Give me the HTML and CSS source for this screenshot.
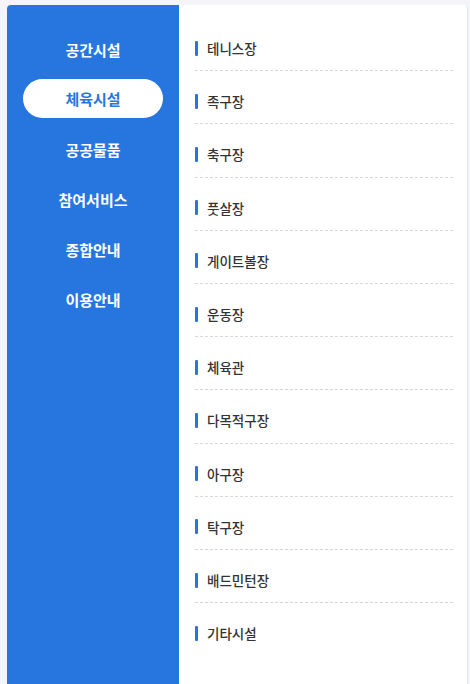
FILE: index.html
```html
<!DOCTYPE html>
<html lang="ko">
<head>
<meta charset="utf-8">
<link rel="stylesheet" href="styles.css">
</head>
<body>
<div class="wrap">
  <nav class="side">
    <a class="side-item">공간시설</a>
    <a class="side-item active"><span class="pill">체육시설</span></a>
    <a class="side-item">공공물품</a>
    <a class="side-item">참여서비스</a>
    <a class="side-item">종합안내</a>
    <a class="side-item">이용안내</a>
  </nav>
  <section class="panel">
    <ul class="list">
      <li class="item">테니스장</li>
      <li class="item">족구장</li>
      <li class="item">축구장</li>
      <li class="item">풋살장</li>
      <li class="item">게이트볼장</li>
      <li class="item">운동장</li>
      <li class="item">체육관</li>
      <li class="item">다목적구장</li>
      <li class="item">아구장</li>
      <li class="item">탁구장</li>
      <li class="item">배드민턴장</li>
      <li class="item">기타시설</li>
    </ul>
  </section>
</div>
</body>
</html>
```

FILE: styles.css
```css
html, body {
  margin: 0;
  padding: 0;
  height: 100%;
}
body {
  background: #f4f4f9;
  font-family: "Noto Sans CJK KR", "Noto Sans", sans-serif;
  overflow: hidden;
}
.wrap {
  display: flex;
  margin: 5px 2px 0 7px;
  height: calc(100% - 5px);
  border-radius: 4px 4px 0 0;
  overflow: hidden;
}
.side {
  width: 172px;
  flex: none;
  background: #2776e0;
  padding: 20px 16px 0;
  box-sizing: border-box;
  display: flex;
  flex-direction: column;
}
.side-item {
  display: flex;
  align-items: center;
  justify-content: center;
  height: 50px;
  color: #fff;
  font-size: 15px;
  font-weight: 700;
  line-height: 20px;
}
.side-item.active {
  align-items: flex-start;
  padding-top: 4px;
  box-sizing: border-box;
}
.pill {
  display: flex;
  align-items: center;
  justify-content: center;
  width: 100%;
  height: 39px;
  background: #fff;
  border-radius: 20px;
  color: #2776e0;
}
.panel {
  flex: 1;
  background: #fff;
  border-right: 1px solid #dfe5f0;
  border-top-right-radius: 4px;
  padding: 13px 14px 0 16px;
}
.list {
  list-style: none;
  margin: 0;
  padding: 0;
}
.item {
  display: flex;
  align-items: center;
  gap: 9px;
  padding: 20px 0 12px;
  line-height: 20.2px;
  font-size: 13.5px;
  font-weight: 500;
  color: #333;
  border-bottom: 1px dashed #d8d8d8;
}
.item:last-child {
  border-bottom: none;
}
.item::before {
  content: "";
  width: 3px;
  height: 15px;
  background: #2776e0;
  border-radius: 1px;
}
```
